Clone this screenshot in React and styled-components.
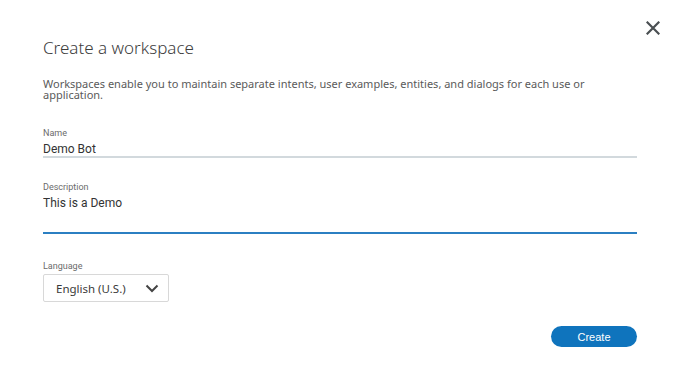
import React, { useState } from 'react';
import styled, { createGlobalStyle } from 'styled-components';

const GlobalStyle = createGlobalStyle`
  html, body {
    margin: 0;
    padding: 0;
    background: #ffffff;
  }
  body {
    font-family: "Noto Sans", "Open Sans", sans-serif;
  }
`;

const Modal = styled.div`
  position: relative;
  width: 680px;
  height: 365px;
  box-sizing: border-box;
  padding: 37px 43px 0 43px;
  background: #ffffff;
`;

const CloseButton = styled.button`
  position: absolute;
  top: 21px;
  right: 20px;
  width: 14px;
  height: 14px;
  padding: 0;
  border: none;
  background: none;
  cursor: pointer;
  display: flex;
`;

const Title = styled.h2`
  margin: 0;
  font-family: "Noto Sans", sans-serif;
  font-weight: 300;
  font-size: 17px;
  line-height: 22px;
  color: #3d3d3d;
`;

const Intro = styled.p`
  margin: 19px 0 0 0;
  font-size: 11px;
  line-height: 11px;
  color: #5a5a5a;
  max-width: 560px;
`;

const Field = styled.div`
  margin-top: ${({ gap }) => gap}px;
  width: 594px;
`;

const Label = styled.label`
  display: block;
  font-family: Roboto, sans-serif;
  font-size: 9px;
  line-height: 11px;
  color: #6b6b6b;
`;

const TextInput = styled.input`
  display: block;
  width: 100%;
  box-sizing: border-box;
  border: none;
  border-bottom: 2px solid ${({ active }) => (active ? '#2b7fc2' : '#d2d9dd')};
  padding: 3px 0 ${({ tall }) => (tall ? 22 : 0)}px 0;
  font-family: Roboto, sans-serif;
  font-size: 12px;
  line-height: 14px;
  color: #333333;
  outline: none;
  background: transparent;
`;

const Select = styled.div`
  margin-top: 2px;
  width: 126px;
  height: 28px;
  box-sizing: border-box;
  border: 1px solid #d8d8d8;
  border-radius: 2px;
  display: flex;
  align-items: center;
  justify-content: space-between;
  padding: 0 9px 0 12px;
  font-family: "Noto Sans", sans-serif;
  font-size: 11.5px;
  color: #3a3a3a;
`;

const Footer = styled.div`
  display: flex;
  justify-content: flex-end;
  width: 594px;
  margin-top: 24px;
`;

const PrimaryButton = styled.button`
  width: 86px;
  height: 21px;
  border: none;
  border-radius: 11px;
  background: #0f74bd;
  color: #ffffff;
  font-family: "Liberation Sans", Arial, sans-serif;
  font-size: 11px;
  padding: 0;
  cursor: pointer;
`;

const CloseIcon = () => (
  <svg width="14" height="14" viewBox="0 0 14 14">
    <path d="M1.5 1.5 L12.5 12.5 M12.5 1.5 L1.5 12.5" stroke="#4a4f52" strokeWidth="2.2" strokeLinecap="square" />
  </svg>
);

const Chevron = () => (
  <svg width="14" height="9" viewBox="0 0 14 9">
    <path d="M1.5 1.5 L7 7 L12.5 1.5" fill="none" stroke="#444" strokeWidth="2" />
  </svg>
);

const App = () => {
  const [name, setName] = useState('Demo Bot');
  const [description, setDescription] = useState('This is a Demo');

  return (
    <>
      <GlobalStyle />
      <Modal>
        <CloseButton aria-label="Close"><CloseIcon /></CloseButton>
        <Title>Create a workspace</Title>
        <Intro>
          Workspaces enable you to maintain separate intents, user examples, entities, and dialogs for each use or application.
        </Intro>
        <Field gap={28}>
          <Label>Name</Label>
          <TextInput value={name} onChange={e => setName(e.target.value)} />
        </Field>
        <Field gap={24}>
          <Label>Description</Label>
          <TextInput active tall value={description} onChange={e => setDescription(e.target.value)} />
        </Field>
        <Field gap={27}>
          <Label>Language</Label>
          <Select>
            English (U.S.)
            <Chevron />
          </Select>
        </Field>
        <Footer>
          <PrimaryButton>Create</PrimaryButton>
        </Footer>
      </Modal>
    </>
  );
};

export default App;
